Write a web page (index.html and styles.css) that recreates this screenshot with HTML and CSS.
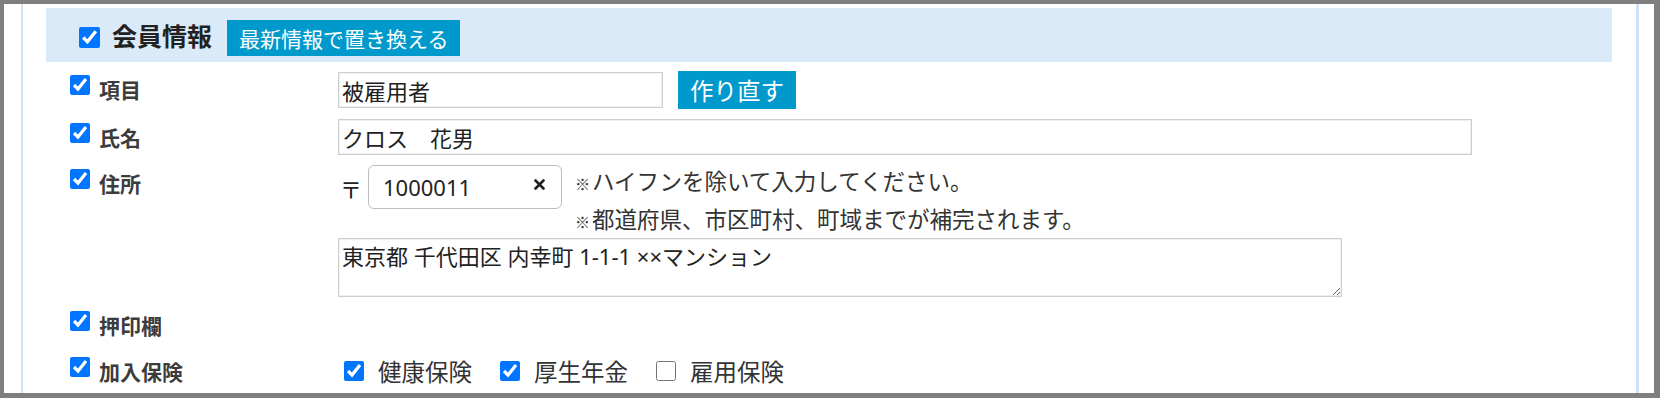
FILE: index.html
```html
<!DOCTYPE html>
<html lang="ja">
<head>
<meta charset="utf-8">
<title>会員情報</title>
<link rel="stylesheet" href="styles.css">
</head>
<body>
<div class="frame">
  <div class="panel">
    <div class="band">
      <input type="checkbox" class="cb cb-lg" checked>
      <span class="title">会員情報</span>
      <button class="btn btn-refresh" type="button">最新情報で置き換える</button>
    </div>
    <div class="rows">
      <div class="row">
        <label class="lbl"><input type="checkbox" class="cb" checked><span class="lbl-text">項目</span></label>
        <div class="field inline">
          <input class="text text-short" type="text" value="被雇用者">
          <button class="btn btn-remake" type="button">作り直す</button>
        </div>
      </div>
      <div class="row">
        <label class="lbl"><input type="checkbox" class="cb" checked><span class="lbl-text">氏名</span></label>
        <div class="field">
          <input class="text text-long" type="text" value="クロス　花男">
        </div>
      </div>
      <div class="row">
        <label class="lbl"><input type="checkbox" class="cb" checked><span class="lbl-text">住所</span></label>
        <div class="field address">
          <div class="zip-line">
            <span class="zip-mark">〒</span>
            <div class="zip-box">
              <input class="zip-input" type="text" value="1000011">
              <span class="zip-clear" aria-label="clear"><svg width="11" height="11" viewBox="0 0 11 11"><path d="M1.5 1.5 L9.5 9.5 M9.5 1.5 L1.5 9.5" stroke="#222" stroke-width="2.6" stroke-linecap="round"/></svg></span>
            </div>
            <div class="hints">
              <div class="hint"><span class="kome">※</span>ハイフンを除いて入力してください。</div>
              <div class="hint"><span class="kome">※</span>都道府県、市区町村、町域までが補完されます。</div>
            </div>
          </div>
          <textarea class="addr">東京都 千代田区 内幸町 1-1-1 ××マンション</textarea>
        </div>
      </div>
      <div class="row">
        <label class="lbl"><input type="checkbox" class="cb" checked><span class="lbl-text">押印欄</span></label>
        <div class="field"></div>
      </div>
      <div class="row">
        <label class="lbl"><input type="checkbox" class="cb" checked><span class="lbl-text">加入保険</span></label>
        <div class="field insurance">
          <label class="ins"><input type="checkbox" class="cb" checked><span>健康保険</span></label>
          <label class="ins"><input type="checkbox" class="cb" checked><span>厚生年金</span></label>
          <label class="ins"><input type="checkbox" class="cb"><span>雇用保険</span></label>
        </div>
      </div>
    </div>
  </div>
</div>
</body>
</html>
```
FILE: styles.css
```css
html, body {
  margin: 0;
  padding: 0;
  background: #ffffff;
}

body {
  font-family: "Noto Sans CJK JP", "Noto Sans", sans-serif;
  color: #222222;
}

.frame {
  width: 1660px;
  height: 398px;
  box-sizing: border-box;
  border-style: solid;
  border-color: #7f7f7f;
  border-width: 4px 6px 5px 4px;
  background: #ffffff;
  overflow: hidden;
}

.panel {
  height: 100%;
  box-sizing: border-box;
  margin: 0 15px 0 17px;
  border-left: 2px solid #cfe2f6;
  border-right: 3px solid #cfe2f6;
  padding-top: 4px;
}

.band {
  height: 54px;
  margin: 0 24px 0 23px;
  background: #dbeaf8;
  display: flex;
  align-items: center;
  padding-left: 33px;
}

.cb {
  width: 20px;
  height: 20px;
  margin: 0;
  accent-color: #0075ff;
  flex: none;
}

.cb-lg {
  width: 21px;
  height: 21px;
  margin-top: 5px;
}

.title {
  margin-left: 12px;
  font-size: 25px;
  font-weight: 700;
  line-height: 32px;
  color: #222222;
}

.btn {
  font-family: "Noto Sans CJK JP", "Noto Sans", sans-serif;
  background: #0099cc;
  color: #ffffff;
  border: none;
  border-radius: 0;
  padding: 0;
  cursor: pointer;
}

.btn-refresh {
  margin-left: 15px;
  margin-top: 6px;
  height: 36px;
  padding: 0 12px;
  font-size: 21px;
  line-height: 36px;
}

.rows {
  margin-top: 9px;
  padding-left: 47px;
  display: flex;
  flex-direction: column;
  gap: 10px;
}

.row {
  display: grid;
  grid-template-columns: 268px 1fr;
  min-height: 36px;
}

.lbl {
  display: flex;
  align-items: flex-start;
  gap: 9px;
  padding-top: 4px;
}

.lbl-text {
  font-size: 21px;
  font-weight: 700;
  line-height: 28px;
  color: #3c3c3c;
}

.field.inline {
  display: flex;
  align-items: center;
  gap: 15px;
}

.text {
  box-sizing: border-box;
  height: 36px;
  border: 1px solid #cfcfcf;
  box-shadow: inset 0 0 0 1px #efefef;
  padding: 0 3px;
  font-family: "Noto Sans CJK JP", "Noto Sans", sans-serif;
  font-size: 22px;
  color: #222222;
  outline: none;
  border-radius: 0;
}

.text-short {
  width: 325px;
}

.text-long {
  width: 1134px;
}

.btn-remake {
  width: 118px;
  height: 38px;
  font-size: 23.5px;
  line-height: 38px;
}

.address {
  display: flex;
  flex-direction: column;
}

.zip-line {
  display: flex;
  align-items: flex-start;
}

.zip-mark {
  margin-left: 2px;
  font-size: 22px;
  line-height: 46px;
  color: #222222;
}

.zip-box {
  box-sizing: border-box;
  width: 194px;
  height: 44px;
  margin-left: 6px;
  border: 1px solid #bdbdbd;
  border-radius: 6px;
  display: flex;
  align-items: center;
  padding: 0 16px 0 14px;
}

.zip-input {
  flex: 1;
  min-width: 0;
  border: none;
  outline: none;
  background: transparent;
  padding: 0;
  font-family: "Noto Sans", "Noto Sans CJK JP", sans-serif;
  font-size: 22px;
  color: #222222;
}

.zip-clear {
  display: flex;
  margin-top: -6px;
}

.hints {
  margin-left: 13px;
  margin-top: -4px;
  font-size: 22.5px;
  color: #333333;
}

.hint {
  height: 38px;
  line-height: 38px;
  white-space: nowrap;
}

.kome {
  font-size: 15px;
  line-height: 1;
  margin-right: 2px;
}

.addr {
  box-sizing: border-box;
  width: 1004px;
  height: 59px;
  margin: 1px 0 0 0;
  border: 1px solid #cfcfcf;
  box-shadow: inset 0 0 0 1px #efefef;
  padding: 3px 3px;
  font-family: "Noto Sans", "Noto Sans CJK JP", sans-serif;
  font-size: 22px;
  line-height: 28px;
  color: #222222;
  outline: none;
  border-radius: 0;
  resize: vertical;
}

.insurance {
  display: flex;
  align-items: center;
  padding-left: 6px;
  gap: 28px;
}

.ins {
  display: flex;
  align-items: center;
  gap: 14px;
  font-size: 23.5px;
  line-height: 36px;
  color: #333333;
}
```
